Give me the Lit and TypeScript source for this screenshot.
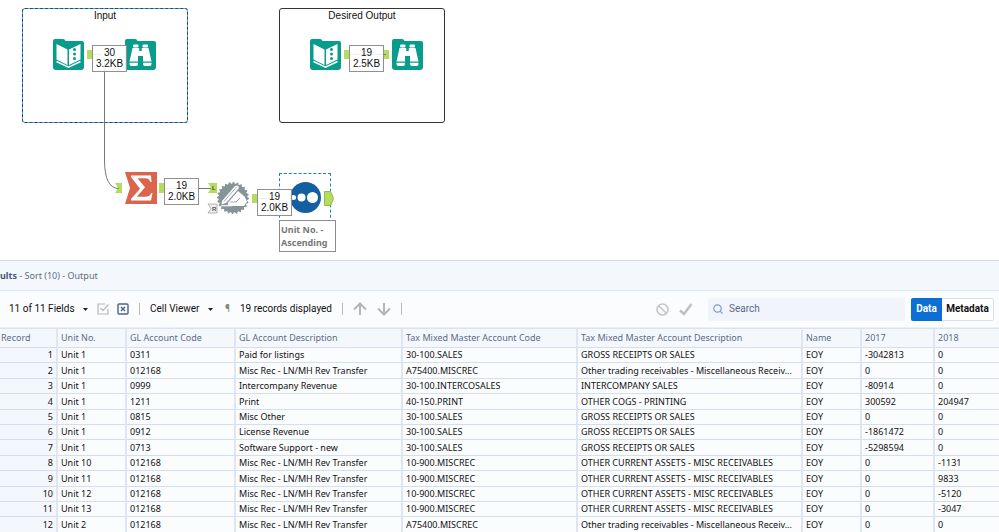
import { LitElement, html, svg, css } from "lit";
import { customElement, property } from "lit/decorators.js";

type Row = [string, string, string, string, string, string, string, string];

const COLUMNS = [
  "Record",
  "Unit No.",
  "GL Account Code",
  "GL Account Description",
  "Tax Mixed Master Account Code",
  "Tax Mixed Master Account Description",
  "Name",
  "2017",
  "2018",
];

const MISC = "Misc Rec - LN/MH Rev Transfer";
const OTHER = "Other trading receivables - Miscellaneous Receiv...";
const GROSS = "GROSS RECEIPTS OR SALES";
const CURRENT = "OTHER CURRENT ASSETS - MISC RECEIVABLES";

const ROWS: Row[] = [
  ["Unit 1", "0311", "Paid for listings", "30-100.SALES", GROSS, "EOY", "-3042813", "0"],
  ["Unit 1", "012168", MISC, "A75400.MISCREC", OTHER, "EOY", "0", "0"],
  ["Unit 1", "0999", "Intercompany Revenue", "30-100.INTERCOSALES", "INTERCOMPANY SALES", "EOY", "-80914", "0"],
  ["Unit 1", "1211", "Print", "40-150.PRINT", "OTHER COGS - PRINTING", "EOY", "300592", "204947"],
  ["Unit 1", "0815", "Misc Other", "30-100.SALES", GROSS, "EOY", "0", "0"],
  ["Unit 1", "0912", "License Revenue", "30-100.SALES", GROSS, "EOY", "-1861472", "0"],
  ["Unit 1", "0713", "Software Support - new", "30-100.SALES", GROSS, "EOY", "-5298594", "0"],
  ["Unit 10", "012168", MISC, "10-900.MISCREC", CURRENT, "EOY", "0", "-1131"],
  ["Unit 11", "012168", MISC, "10-900.MISCREC", CURRENT, "EOY", "0", "9833"],
  ["Unit 12", "012168", MISC, "10-900.MISCREC", CURRENT, "EOY", "0", "-5120"],
  ["Unit 13", "012168", MISC, "10-900.MISCREC", CURRENT, "EOY", "0", "-3047"],
  ["Unit 2", "012168", MISC, "A75400.MISCREC", OTHER, "EOY", "0", "0"],
];

const folder = svg`<path fill="#079c8c" d="M2 0H10Q12 0 12.500 2H29Q31 2 31 4V28Q31 31 28 31H3Q0 31 0 28V2Q0 0 2 0Z"/>`;

const gearPoints = Array.from({ length: 96 }, (_, i) => {
  const r = i % 4 < 2 ? 16 : 14.4;
  const a = (i / 96) * Math.PI * 2;
  return `${(16 + r * Math.cos(a)).toFixed(2)},${(16 + r * Math.sin(a)).toFixed(2)}`;
}).join(" ");

const TOOLS = {
  input: html`<svg width="31" height="31" viewBox="0 0 31 31">${folder}
    <path fill="#fff" d="M3.500 5L14.500 10.500V26L3.500 20.500ZM16 10.500L27.500 5V20.500L16 26Z"/>
    <path fill="none" stroke="#fff" stroke-width="1.500" d="M3.500 22.500L15.500 28.200L27.500 22.500"/>
    <g fill="#079c8c"><circle cx="21.500" cy="10.500" r="1.500"/><circle cx="21.500" cy="15" r="1.500"/><circle cx="21.500" cy="19.500" r="1.500"/></g></svg>`,
  browse: html`<svg width="31" height="31" viewBox="0 0 31 31">${folder}
    <g fill="#fff"><rect x="8" y="5.500" width="5.500" height="3" rx="1"/><rect x="17.500" y="5.500" width="5.500" height="3" rx="1"/>
    <path d="M7.500 9H14.200V12H16.800V9H23.500L26.500 22.500H18V17H13V22.500H4.500Z"/>
    <path d="M4.500 23.800H13V25Q13 27 11 27H6.500Q4.500 27 4.500 25ZM18 23.800H26.500V25Q26.500 27 24.500 27H20Q18 27 18 25Z"/></g></svg>`,
  summarize: html`<svg width="32" height="32" viewBox="0 0 32 32">
    <path fill="#d9664c" d="M0 0H32V32H0L5 16Z"/>
    <path fill="#fff" d="M6 3.500H26L26.500 10H25.300Q24.500 6.300 20.500 6.200H12.500L20 15.300L11.800 24.800H20.500Q25 24.800 26.300 21H27.500L26 28.500H6V27L15 16.700L6 5Z"/></svg>`,
  join: html`<svg width="32" height="32" viewBox="0 0 32 32">
    <polygon fill="#849497" points=${gearPoints} />
    <path fill="#fff" d="M5 19L18 4L21 3.500L22 6L9 21L4.500 22.500Z"/>
    <path fill="#fff" d="M11 20.500L21 9L27.500 14.500L30 19.500L27 24H14Q10 24 11 20.500Z"/>
    <path fill="none" stroke="#849497" stroke-width="0.800" d="M7 19.500L19.500 5M13 20H19L23 16"/>
    <path stroke="#fff" stroke-width="1.200" d="M4.500 23.700H15"/></svg>`,
  sort: html`<svg width="31" height="31" viewBox="0 0 31 31">
    <circle cx="15.500" cy="15.500" r="15.500" fill="#145f9f"/>
    <g fill="#fff"><circle cx="3.500" cy="15.500" r="2.500"/><circle cx="11.500" cy="15.500" r="4"/><circle cx="22.500" cy="15.500" r="5.500"/></g></svg>`,
};

/** A workflow tool placed at a canvas coordinate. */
@customElement("flow-tool")
class FlowTool extends LitElement {
  @property() kind: keyof typeof TOOLS = "input";
  static styles = css`
    :host { position: absolute; display: block; }
    svg { display: block; }
  `;
  render() {
    return TOOLS[this.kind];
  }
}

/** The record count and data size shown on a connection. */
@customElement("flow-count")
class FlowCount extends LitElement {
  @property() records = "";
  @property() size = "";
  static styles = css`
    :host {
      position: absolute;
      display: block;
      box-sizing: border-box;
      width: 35px;
      height: 27px;
      padding-top: 1px;
      border: 1px solid #909090;
      background: rgba(255, 255, 255, 0.88);
      color: #111;
      font: 10px/11px "Liberation Sans", Arial, sans-serif;
      text-align: center;
    }
    div { margin: 0 -2px; }
  `;
  render() {
    return html`<div>${this.records}</div><div>${this.size}</div>`;
  }
}

@customElement("flow-canvas")
class FlowCanvas extends LitElement {
  static styles = css`
    :host { position: relative; display: block; height: 260px; overflow: hidden; background: #fff; }
    .wires { position: absolute; left: 0; top: 0; }
    .box {
      position: absolute;
      box-sizing: border-box;
      top: 8px;
      width: 166px;
      height: 115px;
      border: 1px solid #333;
      border-radius: 3px;
      font: 10px/14px "Liberation Sans", Arial, sans-serif;
      color: #111;
      text-align: center;
    }
    .box.source { left: 22px; border: 1px solid #5aa5e0; }
    .box.source::after {
      content: "";
      position: absolute;
      inset: -1px;
      border: 1px dashed #1d4f7c;
      border-radius: 3px;
    }
    .box.target { left: 279px; }
    .in-a { left: 53px; top: 39px; }
    .br-a { left: 125px; top: 39px; }
    .in-b { left: 310px; top: 39px; }
    .br-b { left: 392px; top: 39px; }
    .sum { left: 125px; top: 172px; }
    .join { left: 217px; top: 182px; }
    .sort { left: 290px; top: 182px; }
    .c-a { left: 92px; top: 45px; }
    .c-b { left: 349px; top: 45px; }
    .c-c { left: 164px; top: 178px; }
    .c-d { left: 257px; top: 189px; }
    .selected {
      position: absolute;
      box-sizing: border-box;
      left: 279px;
      top: 173px;
      width: 52px;
      height: 50px;
      border: 1px dashed #1c7fd0;
    }
    .note {
      position: absolute;
      box-sizing: border-box;
      left: 279px;
      top: 220px;
      width: 57px;
      height: 32px;
      padding: 2px 0 0 1px;
      border: 1px solid #8c8c8c;
      background: #fff;
      color: #777;
      font: bold 9px/13px "Noto Sans", sans-serif;
    }
    .port { font: bold 6px "Liberation Sans", Arial, sans-serif; }
  `;
  render() {
    return html`
      <div class="box source">Input</div>
      <div class="box target">Desired Output</div>
      <div class="selected"></div>
      <svg class="wires" width="460" height="260" viewBox="0 0 460 260">
        <g fill="#b5dc5e">
          <path d="M87 50H92V59H87ZM344 50H349V59H344ZM384 50H389V59H384Z"/>
          <path d="M115 183H122V193H115L118 188ZM159 183H164V193H159Z"/>
          <path d="M208 183H217V193H208L211 188ZM252 194H257V203H252Z"/>
          <path stroke="#8dbb4c" d="M324.500 191.500H330.500L333.500 198.500L330.500 205.500H324.500Z"/>
        </g>
        <path fill="#eee" stroke="#999" stroke-width="0.700" d="M208 204H217V213H208L211 208.500Z"/>
        <g fill="none" stroke="#777">
          <path d="M92 54.500H97Q104.500 54.500 104.500 62V160Q104.500 188.500 119 188.500"/>
          <path d="M349 54.500H386M164 188.500H211M257 198.500H279"/>
        </g>
        <text class="port" x="212" y="190" fill="#375a10">L</text>
        <text class="port" x="212" y="211" fill="#555">R</text>
      </svg>
      <flow-tool class="in-a" kind="input"></flow-tool>
      <flow-tool class="br-a" kind="browse"></flow-tool>
      <flow-tool class="in-b" kind="input"></flow-tool>
      <flow-tool class="br-b" kind="browse"></flow-tool>
      <flow-tool class="sum" kind="summarize"></flow-tool>
      <flow-tool class="join" kind="join"></flow-tool>
      <flow-tool class="sort" kind="sort"></flow-tool>
      <flow-count class="c-a" records="30" size="3.2KB"></flow-count>
      <flow-count class="c-b" records="19" size="2.5KB"></flow-count>
      <flow-count class="c-c" records="19" size="2.0KB"></flow-count>
      <flow-count class="c-d" records="19" size="2.0KB"></flow-count>
      <div class="note">Unit No. -<br />Ascending</div>
    `;
  }
}

@customElement("results-panel")
class ResultsPanel extends LitElement {
  static styles = css`
    :host {
      display: block;
      border-top: 1px solid #d3d9ea;
      background: #fbfcfe;
      font: 9px/14px "Noto Sans", sans-serif;
      color: #111;
    }
    * { box-sizing: border-box; }
    svg { display: block; flex: none; }
    .title {
      height: 30px;
      padding-top: 8px;
      border-bottom: 1px solid #dde5f1;
      background: #f4f8fd;
      color: #5d6b86;
    }
    .title b { color: #46577c; }
    .bar {
      display: flex;
      align-items: center;
      height: 37px;
      padding: 0 5px 0 9px;
      border-bottom: 1px solid #edf0f5;
      color: #111;
      font: 10px/14px Roboto, "Noto Sans", sans-serif;
    }
    .pick { display: flex; align-items: center; gap: 8px; }
    select {
      appearance: none;
      padding: 0;
      border: 0;
      background: none;
      font: inherit;
      color: inherit;
    }
    button { padding: 0; border: 0; background: none; font: inherit; color: inherit; }
    .tools { display: flex; margin-left: 9px; gap: 8px; }
    .rule { width: 1px; height: 12px; margin: 0 10px; background: #bbb; }
    .mark { margin: 0 10px 0 12px; color: #888; }
    .moves { display: flex; gap: 10px; }
    .decide { display: flex; gap: 10px; margin-left: auto; align-items: center; }
    .search {
      display: flex;
      align-items: center;
      gap: 6px;
      width: 197px;
      height: 23px;
      margin: 0 6px 0 15px;
      padding: 0 5px;
      border-radius: 3px;
      background: #f1f4fa;
    }
    input {
      flex: 1;
      min-width: 0;
      padding: 0;
      border: 0;
      outline: 0;
      background: none;
      font: inherit;
    }
    input::placeholder { color: #5d6b86; opacity: 1; }
    .views { display: flex; height: 23px; border: 1px solid #d8dfee; border-radius: 2px; background: #fff; font-weight: 700; }
    .views button { width: 51px; }
    .views .on { width: 31px; margin: -1px 0 -1px -1px; background: #0b6fd3; color: #fff; border-radius: 2px 0 0 2px; }
    .grid { border-top: 1px solid #dae2f0; overflow: hidden; }
    table { width: 100%; border-collapse: separate; border-spacing: 0; table-layout: fixed; }
    th, td {
      height: 15px;
      padding: 0 3px;
      border-right: 2px solid #dfe6f2;
      border-bottom: 1px solid #d5deed;
      overflow: hidden;
      white-space: nowrap;
      text-overflow: ellipsis;
      text-align: left;
      font-weight: 400;
      line-height: 14px;
    }
    tbody tr:nth-child(5n + 2) > *, tbody tr:nth-child(5n + 4) > * { height: 16px; }
    thead th { height: 19px; background: #f4f8fd; color: #5d6b86; }
    thead th:first-child { padding-left: 1px; }
    tbody th { background: #f4f8fd; text-align: right; }
    tr > :last-child { border-right: 0; }
    .w-rec { width: 58px; }
    .w-unit { width: 69px; }
    .w-code { width: 109px; }
    .w-desc { width: 167px; }
    .w-tax { width: 175px; }
    .w-taxd { width: 225px; }
    .w-name { width: 59px; }
    .w-year { width: 73px; }
  `;

  private caret = html`<svg width="5" height="3" viewBox="0 0 5 3"><path d="M0 0H5L2.500 3Z" fill="#222"/></svg>`;

  render() {
    return html`
      <div class="title"><b>ults</b> - Sort (10) - Output</div>
      <div class="bar">
        <label class="pick"><select aria-label="Fields"><option>11 of 11 Fields</option></select>${this.caret}</label>
        <div class="tools">
          <button aria-label="Select all"><svg width="12" height="12" viewBox="0 0 12 12" fill="none" stroke="#b4b7bb" stroke-width="1.200"><path d="M8 1H1V11H11V6M3.500 5L6 7.500L11.500 1.500"/></svg></button>
          <button aria-label="Deselect all"><svg width="12" height="12" viewBox="0 0 12 12" fill="none" stroke="#4e638c" stroke-width="1.400"><rect x="1" y="1" width="10" height="10" rx="1"/><path d="M4 4L8 8M8 4L4 8"/></svg></button>
        </div>
        <span class="rule"></span>
        <label class="pick"><select aria-label="Viewer"><option>Cell Viewer</option></select>${this.caret}</label>
        <button class="mark" aria-label="Show whitespace">¶</button>
        <span>19 records displayed</span>
        <span class="rule"></span>
        <div class="moves">
          <button aria-label="Previous"><svg width="14" height="14" viewBox="0 0 14 14" fill="none" stroke="#b3b5b8" stroke-width="2"><path d="M7 13V2M1 7.500L7 1.500L13 7.500"/></svg></button>
          <button aria-label="Next"><svg width="14" height="14" viewBox="0 0 14 14" fill="none" stroke="#b3b5b8" stroke-width="2"><path d="M7 1V12M1 6.500L7 12.500L13 6.500"/></svg></button>
        </div>
        <span class="rule"></span>
        <div class="decide">
          <button aria-label="Cancel"><svg width="13" height="13" viewBox="0 0 13 13" fill="none" stroke="#c6c8cb" stroke-width="1.700"><circle cx="6.500" cy="6.500" r="5.500"/><path d="M2.500 2.500L10.500 10.500"/></svg></button>
          <button aria-label="Apply"><svg width="14" height="13" viewBox="0 0 14 13" fill="none" stroke="#bcbec1" stroke-width="2.400"><path d="M1 7.500L5 11L12.500 1"/></svg></button>
        </div>
        <label class="search">
          <svg width="10" height="10" viewBox="0 0 10 10" fill="none" stroke="#7d9cc8" stroke-width="1.200"><circle cx="4.500" cy="4.500" r="3.700"/><path d="M7.200 7.200L9.500 9.500"/></svg>
          <input type="search" placeholder="Search" aria-label="Search" />
        </label>
        <div class="views">
          <button class="on" aria-pressed="true">Data</button>
          <button aria-pressed="false">Metadata</button>
        </div>
      </div>
      <div class="grid">
        <table>
          <colgroup>
            <col class="w-rec" /><col class="w-unit" /><col class="w-code" /><col class="w-desc" />
            <col class="w-tax" /><col class="w-taxd" /><col class="w-name" /><col class="w-year" /><col />
          </colgroup>
          <thead><tr>${COLUMNS.map((c) => html`<th scope="col">${c}</th>`)}</tr></thead>
          <tbody>
            ${ROWS.map((r, i) => html`<tr><th scope="row">${i + 1}</th>${r.map((c) => html`<td>${c}</td>`)}</tr>`)}
          </tbody>
        </table>
      </div>
    `;
  }
}

@customElement("app-root")
class AppRoot extends LitElement {
  static styles = css`
    :host { display: block; background: #fff; }
  `;
  render() {
    return html`<flow-canvas></flow-canvas><results-panel></results-panel>`;
  }
}
